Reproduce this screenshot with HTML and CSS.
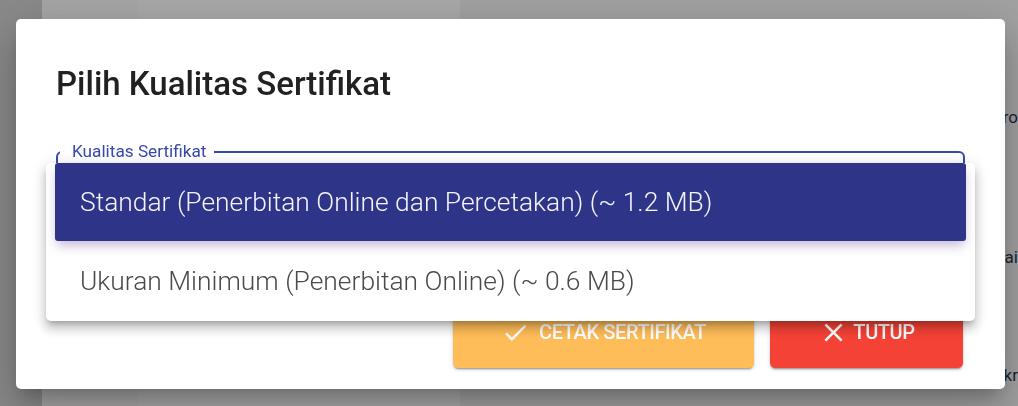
FILE: index.html
```html
<!DOCTYPE html>
<html lang="id">
<head>
<meta charset="utf-8">
<title>Pilih Kualitas Sertifikat</title>
<link rel="stylesheet" href="styles.css">
</head>
<body>
<div class="page">
  <div class="sidebar"></div>
  <div class="rail"></div>
  <div class="list"></div>
  <div class="content">
    <div class="line line-1">Nomor Sertifikat Pro</div>
    <div class="line line-2">Tanggal Mulai</div>
    <div class="line line-3">Status Akr</div>
  </div>
</div>

<div class="overlay">
  <div class="dialog">
    <h2 class="dialog-title">Pilih Kualitas Sertifikat</h2>

    <div class="field">
      <span class="field-label">Kualitas Sertifikat</span>
    </div>

    <div class="actions">
      <button class="btn btn-print">
        <svg class="btn-icon" viewBox="0 0 24 24"><path d="M21,7L9,19L3.5,13.5L4.91,12.09L9,16.17L19.59,5.59L21,7Z"/></svg>
        <span>Cetak Sertifikat</span>
      </button>
      <button class="btn btn-close">
        <svg class="btn-icon btn-icon-x" viewBox="0 0 24 24"><path d="M19,6.41L17.59,5L12,10.59L6.41,5L5,6.41L10.59,12L5,17.59L6.41,19L12,13.41L17.59,19L19,17.59L13.41,12L19,6.41Z"/></svg>
        <span>Tutup</span>
      </button>
    </div>

    <div class="menu">
      <div class="menu-item is-active">Standar (Penerbitan Online dan Percetakan) (~ 1.2 MB)</div>
      <div class="menu-item">Ukuran Minimum (Penerbitan Online) (~ 0.6 MB)</div>
    </div>
  </div>
</div>
</body>
</html>
```

FILE: styles.css
```css
* { box-sizing: border-box; }

html, body {
  margin: 0;
  padding: 0;
  width: 1018px;
  height: 406px;
  overflow: hidden;
}

body {
  font-family: Roboto, "Noto Sans", "Liberation Sans", sans-serif;
  background: #a3a3a3;
}

/* dimmed page behind the dialog */
.page {
  display: flex;
  height: 406px;
}
.sidebar { width: 42px; background: #8a8a8a; }
.rail { width: 96px; background: #a6a6a6; }
.list { width: 322px; background: #a9a9a9; }
.content {
  flex: 1;
  background: #a2a2a2;
  display: flex;
  flex-direction: column;
  align-items: flex-end;
  padding-top: 107px;
}
.line {
  font-size: 17px;
  color: #1b2334;
  white-space: nowrap;
  line-height: 20px;
}
.line-2 { margin-top: 120px; }
.line-3 { margin-top: 98px; }

.overlay {
  position: fixed;
  inset: 0;
  padding: 19px 0 0 16px;
}

.dialog {
  position: relative;
  width: 989px;
  height: 370px;
  background: #fff;
  border-radius: 5px;
  padding: 45px 40px 21px 40px;
  display: flex;
  flex-direction: column;
  box-shadow: 0 11px 15px -7px rgba(0,0,0,.2), 0 24px 38px 3px rgba(0,0,0,.14), 0 9px 46px 8px rgba(0,0,0,.12);
}

.dialog-title {
  margin: 0;
  font-size: 33px;
  line-height: 40px;
  font-weight: 500;
  color: #212121;
}

.field {
  position: relative;
  margin-top: 47px;
  height: 72px;
  border: 2px solid #3949ab;
  border-radius: 6px;
}
.field-label {
  position: absolute;
  top: -12px;
  left: 2px;
  padding: 0 8px 0 12px;
  background: #fff;
  font-size: 17.2px;
  line-height: 20px;
  color: #3949ab;
}

.actions {
  margin-top: auto;
  display: flex;
  justify-content: flex-end;
  gap: 16px;
  padding-right: 2px;
}

.btn {
  display: flex;
  align-items: center;
  justify-content: center;
  gap: 9px;
  height: 66px;
  border: 0;
  border-radius: 5px;
  color: #fff;
  font-family: Roboto, "Noto Sans", sans-serif;
  font-size: 20px;
  font-weight: 500;
  text-transform: uppercase;
  letter-spacing: -0.4px;
  padding: 0 0 6px 0;
  box-shadow: 0 3px 1px -2px rgba(0,0,0,.2), 0 2px 2px 0 rgba(0,0,0,.14), 0 1px 5px 0 rgba(0,0,0,.12);
}
.btn-print { width: 301px; background: #ffbd59; }
.btn-close { width: 193px; background: #f44336; gap: 4px; }
.btn-icon { width: 29px; height: 29px; fill: #fff; }
.btn-icon-x { width: 31px; height: 31px; }

.menu {
  position: absolute;
  left: 30px;
  top: 144px;
  width: 929px;
  background: #fff;
  border-radius: 5px;
  box-shadow: 0 5px 5px -3px rgba(0,0,0,.2), 0 8px 10px 1px rgba(0,0,0,.14), 0 3px 14px 2px rgba(0,0,0,.12);
}

.menu-item {
  display: flex;
  align-items: center;
  height: 80px;
  margin: 0 9px;
  padding: 0 24px 0 25px;
  font-size: 26.4px;
  font-weight: 300;
  color: #4a4a4a;
  white-space: nowrap;
}
.menu-item.is-active {
  height: 78px;
  background: #2e3589;
  color: #f4f4f8;
  border-radius: 3px;
  box-shadow: 0 6px 12px -2px rgba(80, 40, 140, .35);
}
```
